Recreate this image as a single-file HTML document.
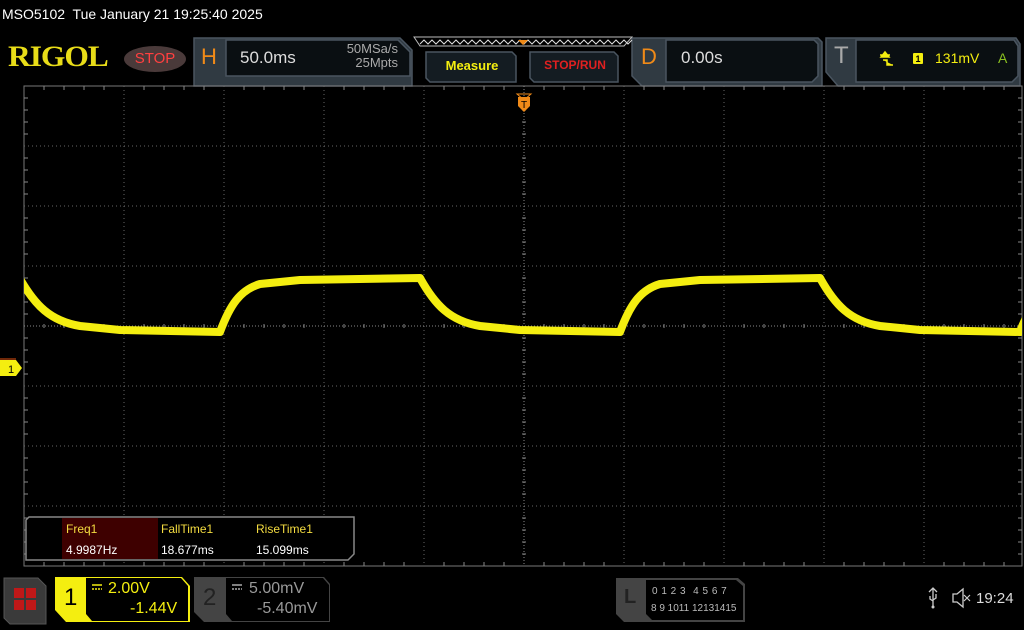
<!DOCTYPE html>
<html><head><meta charset="utf-8"><style>
*{margin:0;padding:0;box-sizing:border-box}
body{width:1024px;height:630px;background:#000;overflow:hidden;position:relative;font-family:"Liberation Sans",sans-serif;color:#fff}
.a{position:absolute}
</style></head><body>
<div class="a" style="left:2px;top:6px;font-size:14px;color:#fff">MSO5102&nbsp; Tue January 21 19:25:40 2025</div>
<div class="a" style="left:8px;top:40px;font-family:'Liberation Serif',serif;font-weight:bold;font-size:30px;color:#e8dc18;letter-spacing:-1px;transform:scaleX(1.05);transform-origin:left">RIGOL</div>
<div class="a" style="left:124px;top:46px;width:62px;height:26px;border-radius:50%;background:#4a3a3a;color:#ff4040;font-size:15px;text-align:center;line-height:26px">STOP</div>
<svg class="a" style="left:0;top:0" width="1024" height="630">
<g fill="#202830" stroke="#4a5560" stroke-width="1.5">
<path d="M194,38 H400 L412,50 V86 H194Z" fill="#303a42"/>
<path d="M226,40 H398 L410,52 V76 H226Z" fill="#0a0f12"/>
<path d="M426,52 H512 L516,56 V82 H430 L426,78Z" fill="#141c22"/>
<path d="M530,52 H614 L618,56 V82 H534 L530,78Z" fill="#141c22"/>
<path d="M632,38 H818 L822,42 V86 H642 L632,76Z" fill="#303a42"/>
<path d="M666,40 H814 L818,44 V76 L812,82 H666Z" fill="#0a0f12"/>
<path d="M826,38 H1016 L1020,44 V86 H838 L826,72Z" fill="#303a42"/>
<path d="M856,40 H1014 L1018,46 V76 L1012,82 H856Z" fill="#0a0f12"/>
</g>
<path d="M414,37 H632 L624,46 H420Z" fill="none" stroke="#bbb" stroke-width="1"/>
<path d="M420,44 l4,-4 l4,4 l4,-4 l4,4 l4,-4 l4,4 l4,-4 l4,4 l4,-4 l4,4 l4,-4 l4,4 l4,-4 l4,4 l4,-4 l4,4 l4,-4 l4,4 l4,-4 l4,4 l4,-4 l4,4 l4,-4 l4,4 l4,-4 l4,4 l4,-4 l4,4 l4,-4 l4,4 l4,-4 l4,4 l4,-4 l4,4 l4,-4 l4,4 l4,-4 l4,4 l4,-4 l4,4 l4,-4 l4,4 l4,-4 l4,4 l4,-4 l4,4 l4,-4 l4,4 l4,-4 l4,4 l4,-4 l4,4 l4,-4" fill="none" stroke="#ddd" stroke-width="1"/>
<path d="M518,40 h10 l-5,5z" fill="#f08a18"/>
<rect x="24" y="86" width="998" height="480" fill="none" stroke="#777" stroke-width="1"/>
<g stroke="#666" stroke-width="1" stroke-dasharray="1,3">
<path d="M124,86V566M224,86V566M324,86V566M424,86V566M624,86V566M724,86V566M824,86V566M924,86V566"/>
<path d="M24,146H1022M24,206H1022M24,266H1022M24,386H1022M24,446H1022M24,506H1022"/>
</g>
<g stroke="#888" stroke-width="1" stroke-dasharray="1,2">
<path d="M524,86V566M24,326H1022"/>
</g>
<g stroke="#888" stroke-width="1">
<path id="tk" d="M44,86v4M64,86v4M84,86v4M104,86v4M144,86v4M164,86v4M184,86v4M204,86v4M244,86v4M264,86v4M284,86v4M304,86v4M344,86v4M364,86v4M384,86v4M404,86v4M444,86v4M464,86v4M484,86v4M504,86v4M544,86v4M564,86v4M584,86v4M604,86v4M644,86v4M664,86v4M684,86v4M704,86v4M744,86v4M764,86v4M784,86v4M804,86v4M844,86v4M864,86v4M884,86v4M904,86v4M944,86v4M964,86v4M984,86v4M1004,86v4"/>
<use href="#tk" y="476"/><use href="#tk" y="238"/>
<path id="vt" d="M24,98h4M24,110h4M24,122h4M24,134h4M24,158h4M24,170h4M24,182h4M24,194h4M24,218h4M24,230h4M24,242h4M24,254h4M24,278h4M24,290h4M24,302h4M24,314h4M24,338h4M24,350h4M24,362h4M24,374h4M24,398h4M24,410h4M24,422h4M24,434h4M24,458h4M24,470h4M24,482h4M24,494h4M24,518h4M24,530h4M24,542h4M24,554h4"/>
<use href="#vt" x="498"/><use href="#vt" x="994"/>
</g>
<g clip-path="url(#c)"><clipPath id="c"><rect x="24" y="86" width="998" height="480"/></clipPath>
<path d="M20,279 C35,305 50,321 80,326 L120,330 L220,332 C230,305 240,290 260,284 L300,280 L420,278 C435,305 450,321 480,326 L520,330 L620,332 C630,305 640,290 660,284 L700,280 L820,278 C835,305 850,321 880,326 L920,330 L1020,332 C1022,326 1024,322 1026,318" fill="none" stroke="#f4ee10" stroke-width="8" stroke-linejoin="round"/>
</g>
<path d="M517,94 h14 l-7,6z" fill="none" stroke="#f08a18"/>
<path d="M518,97 h12 v9 l-6,6 l-6,-6z" fill="#f08a18"/>
<text x="524" y="108" font-size="10" fill="#000" text-anchor="middle" font-family="Liberation Sans">T</text>
<path d="M0,360 H16 L22,368 L16,376 H0Z" fill="#f4ee10"/>
<path d="M0,359 H16" stroke="#e05010"/>
<text x="8" y="373" font-size="11" fill="#000">1</text>
<path d="M29,517 H354 V554 L348,560 H26 V520Z" fill="#000" stroke="#888" stroke-width="1.5"/>
<rect x="62" y="518" width="96" height="41" fill="#3e0000"/>
<path d="M4,578 H38 L46,586 V624 H10 L4,618Z" fill="#3a3a3a" stroke="#555"/>
<rect x="14" y="588" width="10" height="10" fill="#c01818"/><rect x="26" y="588" width="10" height="10" fill="#c01818"/>
<rect x="14" y="600" width="10" height="10" fill="#c01818"/><rect x="26" y="600" width="10" height="10" fill="#c01818"/>
<path d="M55,577 H182 L190,586 V622 H66 L55,610Z" fill="#f4ee10"/>
<path d="M86,578 H181 L188,586 V621 H92 L86,614Z" fill="#000"/>
<path d="M194,577 H324 L330,584 V622 H204 L194,612Z" fill="#444"/>
<path d="M226,578 H323 L329,585 V621 H232 L226,614Z" fill="#000"/>
<path d="M616,578 H738 L745,584 V622 H624 L616,614Z" fill="#444"/>
<path d="M646,580 H736 L743,586 V620 H652 L646,614Z" fill="#000"/>
<g stroke="#f4ee10" stroke-width="1.5"><path d="M92,585h10"/><path d="M92,589h10" stroke-dasharray="2,1"/></g>
<g stroke="#aaa" stroke-width="1.5"><path d="M232,585h10"/><path d="M232,589h10" stroke-dasharray="2,1"/></g>
<path d="M880,55 h10 M885,52 l-4,5 h8z M883,60 h4 v5 h6" stroke="#f4ee10" fill="#f4ee10" stroke-width="1.5"/>
<rect x="913" y="53" width="10" height="11" rx="1" fill="#f4ee10"/>
<text x="918" y="62" font-size="9" fill="#000" text-anchor="middle" font-weight="bold">1</text>
<path d="M933,588v18M929,592l4,-4l4,4M930,596v3l3,2M936,594v4l-3,2" stroke="#ccc" fill="none" stroke-width="1.3"/>
<circle cx="933" cy="607" r="1.5" fill="#ccc"/>
<path d="M953,594h4l6,-5v18l-6,-5h-4z" stroke="#ccc" fill="none" stroke-width="1.3"/>
<path d="M964,595l6,6M970,595l-6,6" stroke="#ccc" stroke-width="1.2"/>
</svg>
<div class="a" style="left:201px;top:44px;font-size:22px;color:#f08a18">H</div>
<div class="a" style="left:240px;top:48px;font-size:17px;color:#ddd">50.0ms</div>
<div class="a" style="left:332px;top:42px;font-size:13px;color:#aaa;line-height:14px;text-align:right;width:66px">50MSa/s<br>25Mpts</div>
<div class="a" style="left:430px;top:58px;width:84px;text-align:center;font-size:13px;font-weight:bold;color:#f4ee10">Measure</div>
<div class="a" style="left:532px;top:58px;width:86px;text-align:center;font-size:12px;font-weight:bold;color:#e02020">STOP/RUN</div>
<div class="a" style="left:641px;top:44px;font-size:22px;color:#f08a18">D</div>
<div class="a" style="left:681px;top:48px;font-size:17px;color:#ddd">0.00s</div>
<div class="a" style="left:834px;top:42px;font-size:24px;color:#aaa">T</div>
<div class="a" style="left:935px;top:50px;font-size:14px;color:#f4ee10">131mV</div>
<div class="a" style="left:998px;top:50px;font-size:14px;color:#8ac020">A</div>
<div class="a" style="left:66px;top:522px;font-size:12px;color:#f4dc40">Freq1</div>
<div class="a" style="left:161px;top:522px;font-size:12px;color:#f4dc40">FallTime1</div>
<div class="a" style="left:256px;top:522px;font-size:12px;color:#f4dc40">RiseTime1</div>
<div class="a" style="left:66px;top:543px;font-size:12px;color:#fff">4.9987Hz</div>
<div class="a" style="left:161px;top:543px;font-size:12px;color:#fff">18.677ms</div>
<div class="a" style="left:256px;top:543px;font-size:12px;color:#fff">15.099ms</div>
<div class="a" style="left:64px;top:584px;font-size:24px;color:#000">1</div>
<div class="a" style="left:108px;top:580px;font-size:16px;color:#f4ee10">2.00V</div>
<div class="a" style="left:130px;top:600px;font-size:16px;color:#f4ee10">-1.44V</div>
<div class="a" style="left:203px;top:584px;font-size:24px;color:#222">2</div>
<div class="a" style="left:249px;top:580px;font-size:16px;color:#999">5.00mV</div>
<div class="a" style="left:257px;top:600px;font-size:16px;color:#999">-5.40mV</div>
<div class="a" style="left:624px;top:586px;font-size:20px;color:#222;font-weight:bold">L</div>
<div class="a" style="left:652px;top:586px;font-size:10px;color:#bbb;word-spacing:1px">0 1 2 3 &nbsp;4 5 6 7</div>
<div class="a" style="left:651px;top:603px;font-size:10px;color:#bbb">8 9 1011 12131415</div>
<div class="a" style="left:976px;top:590px;font-size:15px;color:#ddd">19:24</div>
</body></html>
